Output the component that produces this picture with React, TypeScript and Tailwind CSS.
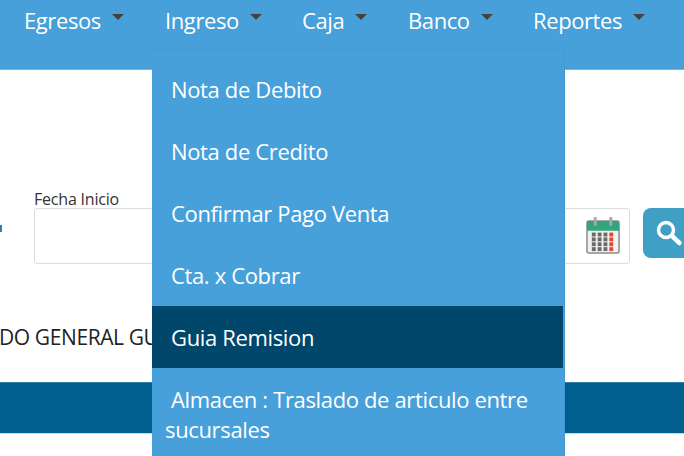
const navItems = [
  { label: "Egresos", width: "w-[141px]" },
  { label: "Ingreso", width: "w-[137px]" },
  { label: "Caja", width: "w-[106px]" },
  { label: "Banco", width: "w-[125px]" },
  { label: "Reportes", width: "w-[140px]" },
]

const menuItems = [
  { label: "Nota de Debito" },
  { label: "Nota de Credito" },
  { label: "Confirmar Pago Venta" },
  { label: "Cta. x Cobrar" },
  { label: "Guia Remision", active: true },
]

function CalendarIcon() {
  return (
    <svg width="35" height="37" viewBox="0 0 36 38">
      <rect x="1" y="4" width="33" height="33" rx="2" fill="#f2f2f2" stroke="#8a8a8a" strokeWidth="1.5" />
      <path d="M1 14V6a2 2 0 0 1 2-2h29a2 2 0 0 1 2 2v8z" fill="#2fa77a" />
      <rect x="8" y="0" width="3" height="9" rx="1" fill="#a8a8a8" />
      <rect x="24" y="0" width="3" height="9" rx="1" fill="#a8a8a8" />
      {[17, 22, 27, 32].map((y) =>
        [6, 12, 18, 24].map((x) => (
          <rect key={`${x}-${y}`} x={x} y={y - 1} width="4" height="4" fill={x === 24 ? "#e8452c" : "#6b6b6b"} />
        )),
      )}
    </svg>
  )
}

function SearchIcon() {
  return (
    <svg width="28" height="28" viewBox="0 0 28 28" fill="none" stroke="#ffffff">
      <circle cx="11" cy="11" r="7.5" strokeWidth="3.5" />
      <path d="M17 17l7.5 7" strokeWidth="4.5" strokeLinecap="round" />
    </svg>
  )
}

export default function App() {
  return (
    <div className="relative w-[684px] h-[456px] overflow-hidden bg-white font-['Open_Sans',sans-serif]">
      <nav className="flex h-[70px] items-start bg-[#47a0da] pl-[24px] border-b border-[#6fb5e3]">
        {navItems.map((item) => (
          <div key={item.label} className={`flex items-center gap-[11px] h-[40px] shrink-0 text-[22px] tracking-[-0.4px] text-white ${item.width}`}>
            {item.label}
            <span className="mb-[6px] h-0 w-0 border-x-[6px] border-t-[6px] border-x-transparent border-t-[#4a3f3d]" />
          </div>
        ))}
      </nav>

      <div className="h-[113px]" />

      <div className="relative flex items-start pl-[34px]">
        <span className="absolute left-0 top-[42px] block h-[7px] w-[2px] bg-[#2f7fb0]" />
        <div className="w-[596px] shrink-0">
          <div className="h-[25px] text-[16px] leading-[32px] text-[#333333] tracking-[-0.2px]">Fecha Inicio</div>
          <div className="flex h-[56px] items-center justify-end rounded-[3px] border border-[#dcdfdf] pr-[8px] pb-[1px]">
            <CalendarIcon />
          </div>
        </div>
        <div className="ml-[13px] mt-[25px] flex h-[50px] w-[60px] shrink-0 items-center rounded-[8px] bg-[#3f9fc5] pl-[12px]">
          <SearchIcon />
        </div>
      </div>

      <div className="mt-[59px] -ml-[1px] h-[28px] w-[153px] overflow-hidden whitespace-nowrap text-[21px] leading-[28px] tracking-[-0.4px] text-[#222222]">
        DO GENERAL GU
      </div>

      <div className="mt-[31px] h-[51px] bg-[#005f8f] border-t border-[#2f7fa8]" />
      <div className="h-px bg-[#d8d8d8]" />

      <div className="absolute left-[152px] top-[49px] w-[413px] bg-[#47a0da] pt-[8px] pb-[14px] border-t border-r border-[#4497cf]">
        {menuItems.map((item) => (
          <div
            key={item.label}
            className={
              item.active
                ? "flex h-[62px] items-center bg-[#00476b] pl-[19px] mr-[1px] text-[22px] tracking-[-0.35px] text-white"
                : "flex h-[62px] items-center pl-[19px] text-[22px] tracking-[-0.35px] text-white"
            }
          >
            {item.label}
          </div>
        ))}
        <div className="pl-[13px] pt-[16px] pr-[20px] text-[22px] leading-[30px] tracking-[-0.35px] text-white">
          <span className="pl-[6px]">Almacen : Traslado de articulo entre</span>
          <br />
          sucursales
        </div>
      </div>
    </div>
  )
}
